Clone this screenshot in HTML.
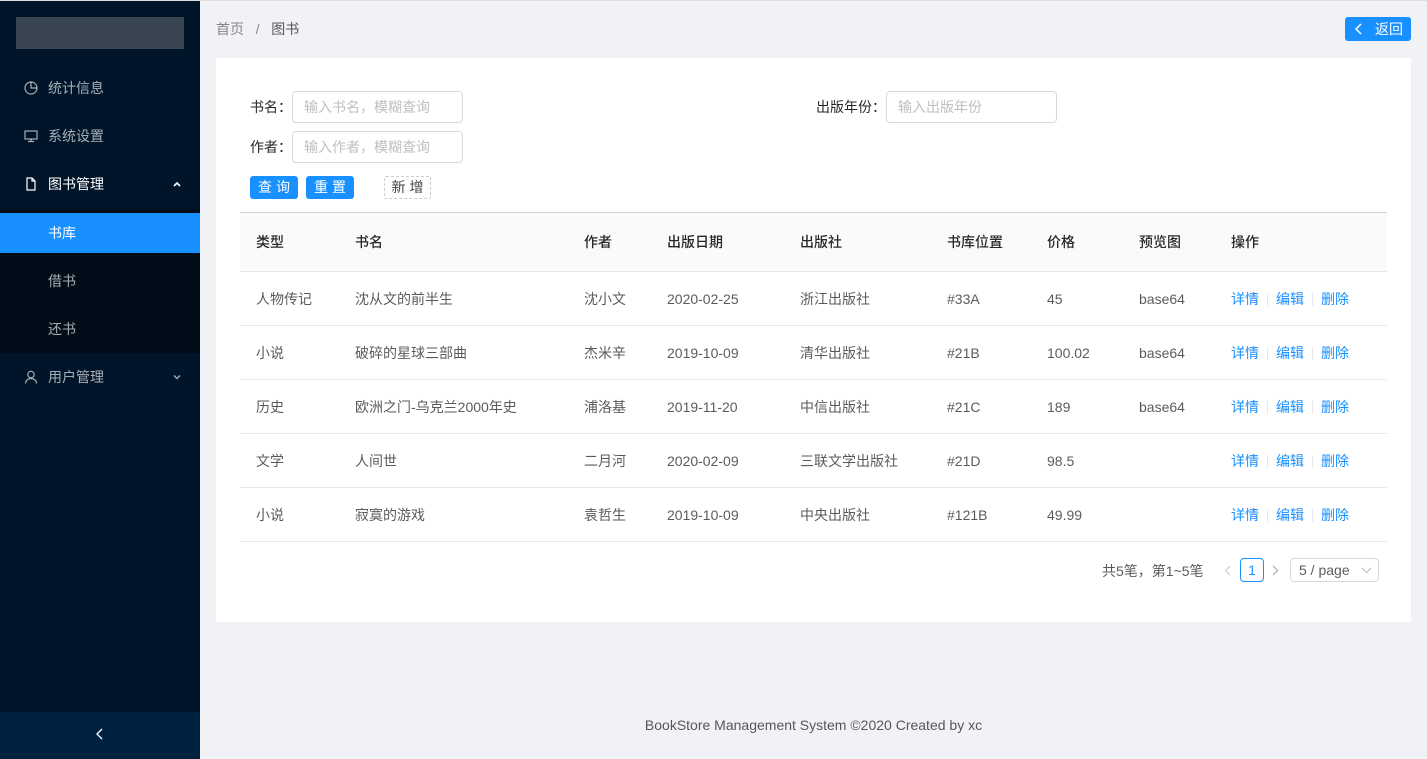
<!DOCTYPE html>
<html><head><meta charset="utf-8"><style>
*{box-sizing:border-box;margin:0;padding:0}
body{width:1427px;height:759px;overflow:hidden;font-family:"Liberation Sans","Noto Sans CJK SC",sans-serif;font-size:14px;color:rgba(0,0,0,.65);background:#f0f2f5;position:relative}
.topline{position:absolute;left:0;top:0;width:1427px;height:1px;background:#ddd;z-index:5}
.side{position:absolute;left:0;top:0;width:200px;height:759px;background:#001529}
.logo{position:absolute;left:16px;top:17px;width:168px;height:32px;background:#38444f}
.mi{position:absolute;left:0;width:200px;height:40px;line-height:40px;color:rgba(255,255,255,.65);padding-left:48px}
.mi svg{position:absolute;left:24px;top:13px}
.mi svg.arr{left:auto;right:19px;top:17px}
.sub{position:absolute;left:0;top:209px;width:200px;height:144px;background:#000c17}
.sel{background:#1890ff;color:#fff}
.col{position:absolute;left:0;top:712px;width:200px;height:47px;background:#002140;color:#fff;text-align:center;line-height:47px}
.bc{position:absolute;left:216px;top:19px;color:rgba(0,0,0,.45)}
.bc b{font-weight:normal;color:rgba(0,0,0,.65)}
.back{position:absolute;left:1345px;top:17px;width:66px;height:24px;background:#1890ff;color:#fff;border-radius:3px;line-height:24px;padding-left:30px;font-size:14px}
.card{position:absolute;left:216px;top:58px;width:1195px;height:564px;background:#fff}
.lbl{position:absolute;color:rgba(0,0,0,.85)}
.inp{position:absolute;width:171px;height:32px;border:1px solid #d9d9d9;border-radius:4px;color:#bfbfbf;padding-left:11px;line-height:30px}
.btn{position:absolute;top:176px;height:23px;width:48px;background:#1890ff;color:#fff;border-radius:3px;text-align:center;line-height:23px;letter-spacing:4px;padding-left:4px}
table{position:absolute;left:240px;top:212px;width:1147px;border-collapse:collapse;border-top:1px solid #d0d0d0}
th{background:#fafafa;height:59px;text-align:left;font-weight:500;color:rgba(0,0,0,.85);padding-left:16px;border-bottom:1px solid #e8e8e8}
td{height:54px;padding-left:16px;border-bottom:1px solid #e8e8e8}
a{color:#1890ff;text-decoration:none}
.sp{display:inline-block;width:1px;height:13px;background:#e8e8e8;margin:0 8px;vertical-align:-2px}
.foot{position:absolute;left:200px;width:1227px;top:717px;text-align:center;color:rgba(0,0,0,.65)}
</style></head><body>
<div class="topline"></div>
<div class="side">
<div class="logo"></div>
<div class="mi" style="top:68px"><svg width="14" height="14" viewBox="0 0 14 14" fill="none" stroke="rgba(255,255,255,.65)" stroke-width="1.2"><circle cx="7" cy="7" r="6"/><path d="M7 1v6h6"/></svg>统计信息</div>
<div class="mi" style="top:116px"><svg width="14" height="14" viewBox="0 0 14 14" fill="none" stroke="rgba(255,255,255,.65)" stroke-width="1.2"><rect x="1" y="2" width="12" height="8"/><path d="M4 12.5h6M7 10v2.5"/></svg>系统设置</div>
<div class="mi" style="top:164px;color:#fff"><svg width="14" height="14" viewBox="0 0 14 14" fill="none" stroke="#fff" stroke-width="1.2"><path d="M3 1h5l3 3v9H3z M8 1v3h3"/></svg>图书管理<svg class="arr" width="8" height="6" viewBox="0 0 8 6" fill="none" stroke="#fff" stroke-width="1.6"><path d="M1 5l3-3 3 3"/></svg></div>
<div class="sub"></div>
<div class="mi sel" style="top:213px">书库</div>
<div class="mi" style="top:261px">借书</div>
<div class="mi" style="top:309px">还书</div>
<div class="mi" style="top:357px"><svg width="14" height="14" viewBox="0 0 14 14" fill="none" stroke="rgba(255,255,255,.65)" stroke-width="1.2"><circle cx="7" cy="4.5" r="3.2"/><path d="M1.5 13.5c0-3 2.5-5 5.5-5s5.5 2 5.5 5"/></svg>用户管理<svg class="arr" width="8" height="6" viewBox="0 0 8 6" fill="none" stroke="rgba(255,255,255,.65)" stroke-width="1.4"><path d="M1 1.5l3 3 3-3"/></svg></div>
<div class="col"><svg width="10" height="12" viewBox="0 0 10 12" fill="none" stroke="#fff" stroke-width="1.3"><path d="M7 1L2 6l5 5"/></svg></div>
</div>
<div class="bc">首页 &nbsp; / &nbsp; <b>图书</b></div>
<div class="back"><svg style="position:absolute;left:10px;top:6px" width="8" height="12" viewBox="0 0 8 12" fill="none" stroke="#fff" stroke-width="1.5"><path d="M6 1L1 6l5 5"/></svg>返回</div>
<div class="card"></div>
<div class="lbl" style="left:250px;top:97px">书名：</div>
<div class="inp" style="left:292px;top:91px">输入书名，模糊查询</div>
<div class="lbl" style="left:250px;top:137px">作者：</div>
<div class="inp" style="left:292px;top:131px">输入作者，模糊查询</div>
<div class="lbl" style="left:816px;top:97px">出版年份：</div>
<div class="inp" style="left:886px;top:91px">输入出版年份</div>
<div class="btn" style="left:250px">查询</div>
<div class="btn" style="left:306px">重置</div>
<div style="position:absolute;left:384px;top:176px;width:47px;height:23px;border:1px dashed #ccc;border-radius:2px;text-align:center;line-height:21px;letter-spacing:4px;padding-left:4px;color:rgba(0,0,0,.75)">新增</div>
<table>
<tr><th style="width:99px">类型</th><th style="width:229px">书名</th><th style="width:83px">作者</th><th style="width:133px">出版日期</th><th style="width:147px">出版社</th><th style="width:100px">书库位置</th><th style="width:92px">价格</th><th style="width:92px">预览图</th><th>操作</th></tr>
<tr><td>人物传记</td><td>沈从文的前半生</td><td>沈小文</td><td>2020-02-25</td><td>浙江出版社</td><td>#33A</td><td>45</td><td>base64</td><td><a>详情</a><span class="sp"></span><a>编辑</a><span class="sp"></span><a>删除</a></td></tr>
<tr><td>小说</td><td>破碎的星球三部曲</td><td>杰米辛</td><td>2019-10-09</td><td>清华出版社</td><td>#21B</td><td>100.02</td><td>base64</td><td><a>详情</a><span class="sp"></span><a>编辑</a><span class="sp"></span><a>删除</a></td></tr>
<tr><td>历史</td><td>欧洲之门-乌克兰2000年史</td><td>浦洛基</td><td>2019-11-20</td><td>中信出版社</td><td>#21C</td><td>189</td><td>base64</td><td><a>详情</a><span class="sp"></span><a>编辑</a><span class="sp"></span><a>删除</a></td></tr>
<tr><td>文学</td><td>人间世</td><td>二月河</td><td>2020-02-09</td><td>三联文学出版社</td><td>#21D</td><td>98.5</td><td></td><td><a>详情</a><span class="sp"></span><a>编辑</a><span class="sp"></span><a>删除</a></td></tr>
<tr><td>小说</td><td>寂寞的游戏</td><td>袁哲生</td><td>2019-10-09</td><td>中央出版社</td><td>#121B</td><td>49.99</td><td></td><td><a>详情</a><span class="sp"></span><a>编辑</a><span class="sp"></span><a>删除</a></td></tr>
</table>
<div style="position:absolute;left:1102px;top:561px">共5笔，第1~5笔</div>
<svg style="position:absolute;left:1224px;top:565px" width="7" height="11" viewBox="0 0 7 11" fill="none" stroke="#ccc" stroke-width="1.2"><path d="M6 1L1.5 5.5 6 10"/></svg>
<div style="position:absolute;left:1240px;top:558px;width:24px;height:24px;border:1px solid #1890ff;border-radius:4px;color:#1890ff;text-align:center;line-height:22px">1</div>
<svg style="position:absolute;left:1272px;top:565px" width="7" height="11" viewBox="0 0 7 11" fill="none" stroke="#aaa" stroke-width="1.2"><path d="M1 1l4.5 4.5L1 10"/></svg>
<div style="position:absolute;left:1290px;top:558px;width:89px;height:24px;border:1px solid #d9d9d9;border-radius:4px;line-height:22px;padding-left:8px">5 / page<svg style="position:absolute;left:70px;top:8px" width="11" height="7" viewBox="0 0 11 7" fill="none" stroke="#bbb" stroke-width="1.1"><path d="M1 1l4.5 4.5L10 1"/></svg></div>
<div class="foot">BookStore Management System ©2020 Created by xc</div>
</body></html>
